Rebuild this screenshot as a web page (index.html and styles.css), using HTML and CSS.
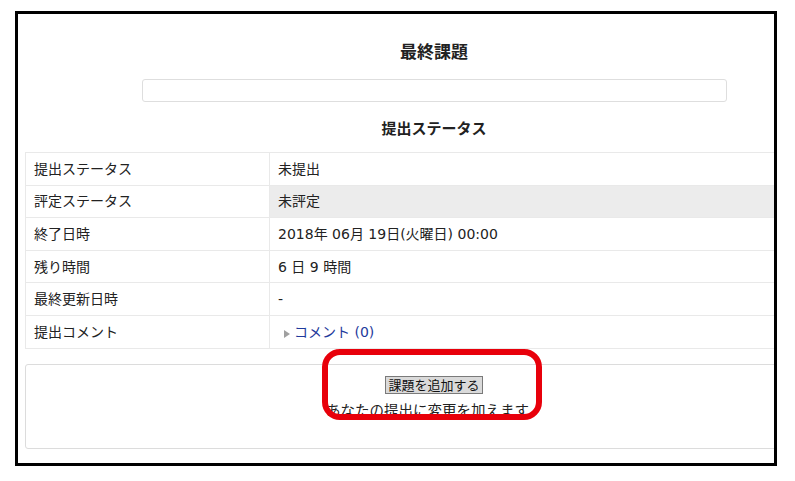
FILE: index.html
```html
<!DOCTYPE html>
<html lang="ja">
<head>
  <meta charset="UTF-8">
  <title>最終課題</title>
  <link rel="stylesheet" href="styles.css">
</head>
<body>
  <div class="frame">
    <div class="page">
      <h2 class="title">最終課題</h2>
      <div class="intro"></div>
      <h3 class="heading">提出ステータス</h3>

      <table class="status">
        <tr>
          <td class="label">提出ステータス</td>
          <td>未提出</td>
        </tr>
        <tr>
          <td class="label">評定ステータス</td>
          <td class="shade">未評定</td>
        </tr>
        <tr>
          <td class="label">終了日時</td>
          <td>2018年 06月 19日(火曜日) 00:00</td>
        </tr>
        <tr>
          <td class="label">残り時間</td>
          <td>6 日 9 時間</td>
        </tr>
        <tr>
          <td class="label">最終更新日時</td>
          <td>-</td>
        </tr>
        <tr>
          <td class="label">提出コメント</td>
          <td><span class="arrow"></span><a href="#" class="comments">コメント (0)</a></td>
        </tr>
      </table>

      <div class="actions">
        <button type="button" class="add">課題を追加する</button>
        <p class="note">あなたの提出に変更を加えます。</p>
      </div>
    </div>

    <!-- annotation marker -->
    <div class="marker"></div>
  </div>
</body>
</html>
```

FILE: styles.css
```css
body {
  margin: 0;
  background: #ffffff;
  font-family: "DejaVu Sans", "Noto Sans CJK JP", sans-serif;
  color: #222;
}
.frame {
  position: relative;
  box-sizing: border-box;
  width: 762px;
  height: 455px;
  margin: 11px 0 0 15px;
  border: 3px solid #000;
  overflow: hidden;
}
.page {
  width: 818px;
  margin-left: 7px;
}
.title {
  margin: 25px 0 0;
  text-align: center;
  font-family: "Noto Sans CJK JP", sans-serif;
  font-size: 17px;
  line-height: 24px;
  font-weight: bold;
}
.intro {
  width: 585px;
  height: 23px;
  box-sizing: border-box;
  margin: 16px auto 0;
  border: 1px solid #dedede;
  border-radius: 3px;
}
.heading {
  margin: 15px 0 0;
  text-align: center;
  font-family: "Noto Sans CJK JP", sans-serif;
  font-size: 15px;
  line-height: 22px;
  font-weight: bold;
}
.status {
  width: 100%;
  margin-top: 13px;
  border-collapse: collapse;
  font-size: 14px;
}
.status tr {
  height: 32.6px;
}
.status td {
  padding: 0 7px 0 8px;
  border: 1px solid #e9e9e9;
  vertical-align: middle;
  line-height: 20px;
}
.status .label {
  width: 228px;
}
.status .shade {
  background: #ececec;
}
.arrow {
  display: inline-block;
  width: 0;
  height: 0;
  margin: 0 4px 0 6px;
  border-top: 4.5px solid transparent;
  border-bottom: 4.5px solid transparent;
  border-left: 6px solid #a0a0a0;
  vertical-align: -1px;
}
.comments {
  color: #1f3a9c;
  text-decoration: none;
}
.actions {
  margin-top: 15px;
  height: 85px;
  box-sizing: border-box;
  padding-top: 11px;
  border: 1px solid #dcdcdc;
  border-radius: 3px;
  text-align: center;
}
.add {
  display: block;
  margin: 0 auto;
  font-family: "Noto Sans CJK JP", sans-serif;
  font-size: 13px;
  line-height: 15px;
  height: 18px;
  padding: 0 2px;
  color: #111;
  background: #dadada;
  border: 1px solid #7a7a7a;
  border-radius: 0;
}
.note {
  margin: 6px 0 0;
  font-family: "Noto Sans CJK JP", sans-serif;
  font-size: 14.5px;
  line-height: 20px;
}
.marker {
  position: absolute;
  left: 304px;
  top: 335px;
  width: 220px;
  height: 71px;
  box-sizing: border-box;
  border: 6px solid #e8000b;
  border-radius: 18px;
}
```
